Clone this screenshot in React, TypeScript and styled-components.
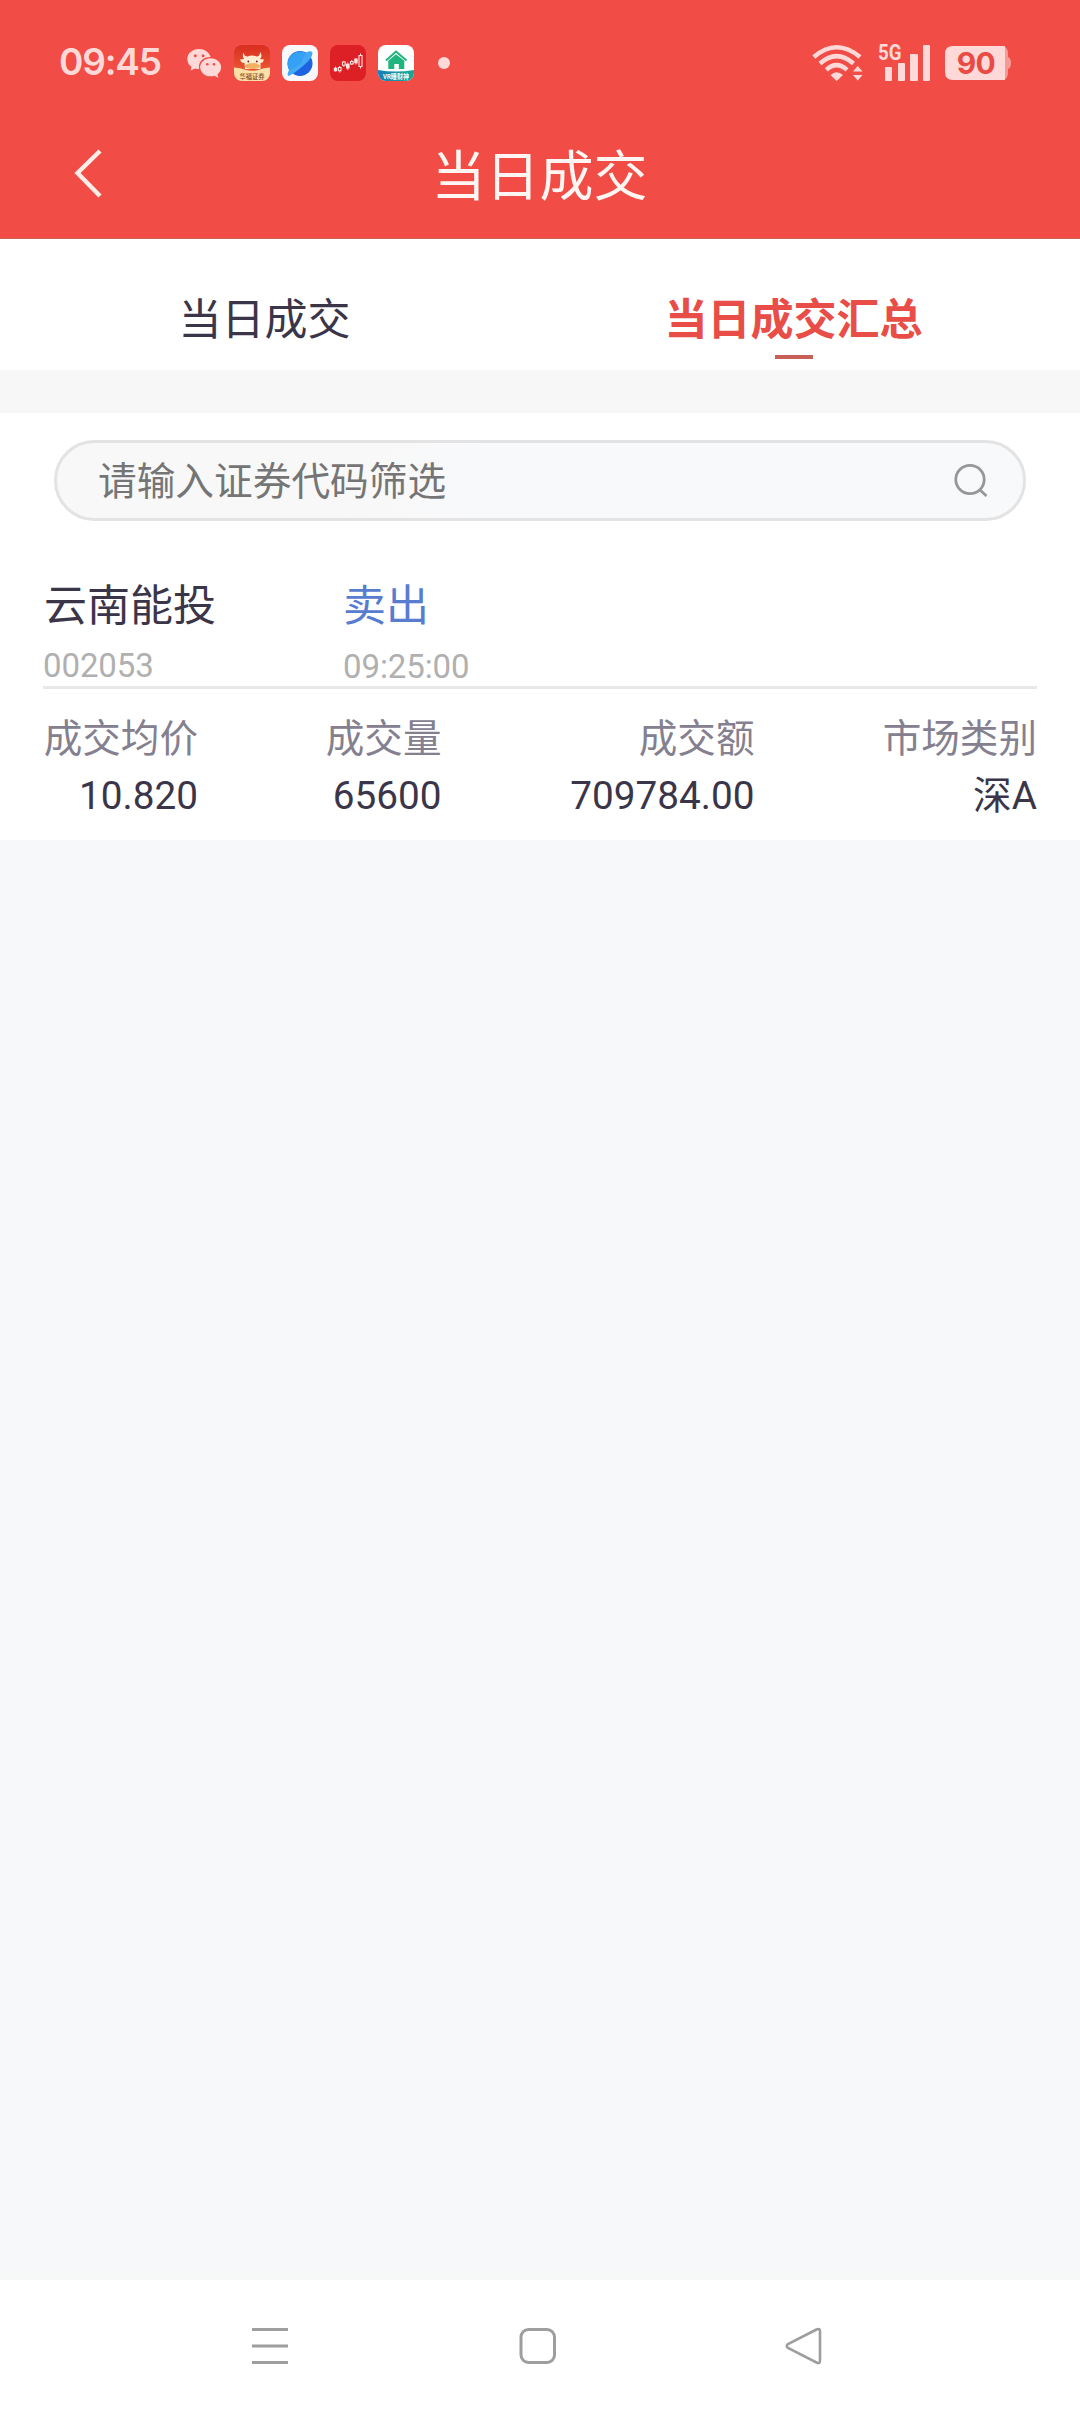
import React from "react";
import styled, { createGlobalStyle } from "styled-components";

const GlobalStyle = createGlobalStyle`
  * { box-sizing: border-box; }
  body {
    margin: 0;
    background: #f7f8fa;
    font-family: Roboto, "Noto Sans CJK SC", sans-serif;
    color: #3a3549;
  }
`;

const Screen = styled.div`
  width: 1080px;
  height: 2412px;
  display: flex;
  flex-direction: column;
  overflow: hidden;
  background: #f7f8fa;
`;

const Header = styled.header`
  height: 239px;
  flex: none;
  background: #f14d46;
  border-bottom: 1px solid #c9635c;
`;

const StatusBar = styled.div`
  height: 125px;
  display: flex;
  justify-content: space-between;
  padding: 0 68px 0 58px;
`;

const StatusGroup = styled.div<{ $gap: number }>`
  height: 126px;
  display: flex;
  align-items: center;
  gap: ${(p) => p.$gap}px;
  color: #ffd9d7;
`;

const Clock = styled.span`
  width: 117px;
  padding: 0 0 2px 1px;
  font: 600 37px/44px Inter, sans-serif;
  letter-spacing: -1.2px;
`;

const Notifications = styled.div`
  display: flex;
  align-items: center;
  gap: 12px;
`;

const Dot = styled.i`
  width: 12px;
  height: 12px;
  margin-left: 12px;
  border-radius: 50%;
  background: #ffd9d7;
`;

const TitleBar = styled.div`
  height: 104px;
  display: grid;
  grid-template-columns: 200px 1fr 200px;
  align-items: center;
`;

const BackButton = styled.button`
  display: flex;
  padding: 0 0 8px 73px;
  border: 0;
  background: none;
`;

const Title = styled.h1`
  margin: 0;
  padding: 2px 1px 0 0;
  text-align: center;
  font-size: 54px;
  font-weight: 400;
  line-height: 60px;
  color: #fff6f3;
`;

const Tabs = styled.nav`
  height: 131px;
  flex: none;
  display: flex;
  padding-right: 22px;
  background: #fff;
`;

const Tab = styled.div<{ $active?: boolean }>`
  flex: 1;
  display: flex;
  flex-direction: column;
  align-items: center;
  padding-top: 59px;
  font-size: 43px;
  line-height: 44px;
  font-weight: ${(p) => (p.$active ? 700 : 400)};
  color: ${(p) => (p.$active ? "#e84e47" : "#3a3549")};
`;

const Underline = styled.span`
  width: 38px;
  height: 4px;
  margin-top: 13px;
  background: #c8605a;
`;

const Divider = styled.div`
  height: 43px;
  flex: none;
  background: #f7f7f7;
`;

const Content = styled.main`
  height: 427px;
  flex: none;
  padding: 27px 43px 0;
  background: #fff;
`;

const SearchBox = styled.div`
  height: 81px;
  margin: 0 11px;
  padding: 0 35px 0 41px;
  display: flex;
  align-items: center;
  justify-content: space-between;
  border: 3px solid #e3e3e3;
  border-radius: 41px;
  background: linear-gradient(90deg, #f8f8f8 30%, #f8f9fb 45%);
`;

const Placeholder = styled.span`
  padding-top: 2px;
  font-size: 38.7px;
  line-height: 46px;
  color: #757575;
`;

const TradeHead = styled.section`
  height: 168px;
  padding-top: 60px;
  display: grid;
  grid-template-columns: 300px 1fr;
  grid-template-rows: 50px 1fr;
  border-bottom: 3px solid #e8e8e8;
`;

const Name = styled.div<{ $sell?: boolean }>`
  padding-left: ${(p) => (p.$sell ? 0 : 1)}px;
  font-size: 43px;
  line-height: 50px;
  color: ${(p) => (p.$sell ? "#587cd0" : "#3a3549")};
`;

const Meta = styled.div<{ $drop?: number }>`
  padding-top: ${(p) => 15 + (p.$drop ?? 0)}px;
  font-size: 33px;
  line-height: 40px;
  letter-spacing: -0.1px;
  color: #b0b0b0;
`;

const Figures = styled.section`
  display: grid;
  grid-template-columns: 155px 243.5px 313px 282.5px;
  padding-top: 26px;
  text-align: right;
`;

const Label = styled.div`
  font-size: 38.6px;
  line-height: 47px;
  color: #84808f;
`;

const Value = styled.div`
  margin-top: 10px;
  font-size: 38.7px;
  line-height: 48px;
  color: #3a3549;
`;

const Filler = styled.div`
  flex: 1;
  border-bottom: 10px solid #f7f8f8;
`;

const SystemNav = styled.footer`
  height: 132px;
  flex: none;
  display: flex;
  align-items: flex-start;
  padding: 46px 256px 0 250px;
  justify-content: space-between;
  background: #fff;
`;

const figures = [
  { label: "成交均价", value: "10.820" },
  { label: "成交量", value: "65600" },
  { label: "成交额", value: "709784.00" },
  { label: "市场类别", value: "深A" },
];

const WeChatIcon = () => (
  <svg width="35" height="30" viewBox="0 0 35 30">
    <path
      fill="#ffd9d7"
      d="M12 1C5.400 1 0.300 5.400 0.300 11c0 3.200 1.600 5.900 4.200 7.800L3.600 22.600l4.500-2.200c1.200.4 2.500.5 4 .5C11 13.500 16.500 9 23.600 9.100 22.300 4.300 17.600 1 12 1Z"
    />
    <path
      fill="#ffd9d7"
      d="M23.600 10.200c-5.900 0-10.400 4-10.400 9s4.500 9.100 10.400 9.100c1.300 0 2.500-.2 3.600-.6l4.200 2-.9-3.500c2.300-1.700 3.600-4.100 3.600-7 0-5-4.600-9-10.500-9Z"
    />
    <g fill="#f24d46">
      <circle cx="8.300" cy="7.800" r="1.500" />
      <circle cx="16" cy="7.800" r="1.500" />
      <circle cx="20.300" cy="16.200" r="1.300" />
      <circle cx="27" cy="16.200" r="1.300" />
    </g>
  </svg>
);

const BullIcon = () => (
  <svg width="36" height="36" viewBox="0 0 36 36">
    <defs>
      <linearGradient id="bull" x2="0" y2="1">
        <stop offset="0" stopColor="#d92d20" />
        <stop offset="1" stopColor="#f2683a" />
      </linearGradient>
      <clipPath id="bullClip">
        <rect width="36" height="36" rx="8" />
      </clipPath>
    </defs>
    <g clipPath="url(#bullClip)">
      <rect width="36" height="36" fill="url(#bull)" />
      <path
        d="M9.500 7.500Q10 11.500 13.500 11.500 18 9.500 22.500 11.500 26 11.500 26 7 29 11 26 14L30 14.500Q29 18 26.500 18L26.500 24H11L10.500 18Q7 18 6 14.500L10 14Q8 11 9.500 7.500Z"
        fill="#ffecd2"
      />
      <ellipse cx="18.500" cy="21" rx="7.500" ry="3" fill="#f5b060" />
      <circle cx="14.300" cy="16.500" r="0.900" fill="#5d251b" />
      <circle cx="22.800" cy="16.500" r="0.900" fill="#5d251b" />
      <path d="M0 22.500Q6 22.500 12 25 18 26.500 24 25 30 22.500 36 22.500V36H0Z" fill="#fbe1a8" />
      <text x="18" y="33.600" textAnchor="middle" fontSize="6.300" fontWeight="500" fill="#7a4a2c">
        华福证券
      </text>
    </g>
  </svg>
);

const BrowserIcon = () => (
  <svg width="36" height="36" viewBox="0 0 36 36">
    <rect width="36" height="36" rx="8" fill="#f8f8fa" />
    <circle cx="18" cy="18.500" r="12.500" fill="#1d63df" />
    <path d="M28 10.500Q22 22 9.500 28A12.500 12.500 0 0 1 27 10Z" fill="#35a1f5" />
    <path d="M24 7.500q6-2.500 6.500.5 0 5-9.500 13T6.500 31q-2-1 .5-6 7-1.500 12-7Z" fill="#45aaf6" />
  </svg>
);

const StockIcon = () => (
  <svg width="36" height="36" viewBox="0 0 36 36">
    <rect width="36" height="36" rx="8" fill="#dc2025" />
    <path
      d="M5.500 21.500v5M17.800 17.500v7.500M26 13.500v6M9.700 21v6.500M13.800 16v6M21.800 15v5M30.500 8.500v15"
      stroke="#ffe4df"
      strokeWidth="1"
    />
    <path d="M3.800 22.800h3.400v3.400H3.800zM16 18.800h3.600v4.700H16zM24.200 13.500h3.500v4.700h-3.500z" fill="#ffe4df" />
    <path
      d="M8.400 22.500h2.600v3.200H8.400zM12.500 17h2.700v3.200h-2.700zM20.500 16.500h2.600v2.500h-2.600zM29 10.500h3v11h-3z"
      fill="#dc2025"
      stroke="#ffe4df"
      strokeWidth="1.100"
    />
  </svg>
);

const HouseIcon = () => (
  <svg width="36" height="36" viewBox="0 0 36 36">
    <defs>
      <linearGradient id="vr">
        <stop stopColor="#197fb8" />
        <stop offset="1" stopColor="#16a995" />
      </linearGradient>
      <clipPath id="vrClip">
        <rect width="36" height="36" rx="8" />
      </clipPath>
    </defs>
    <g clipPath="url(#vrClip)">
      <rect width="36" height="36" fill="#fff" />
      <path d="M0 25Q18 28 36 25V36H0Z" fill="url(#vr)" />
      <path d="M8 15.500 18 6.500l10.500 9" fill="none" stroke="#20b57d" strokeWidth="2" />
      <path d="M10.300 15.800 18 9.200 26.300 15.800V24h-5.500v-5h-4.500v5h-6Z" fill="#20b57d" />
      <text
        x="5"
        y="34"
        fontSize="7"
        fontWeight="700"
        fill="#eaffff"
        textLength="26"
        lengthAdjust="spacingAndGlyphs"
      >
        VR睡财神
      </text>
    </g>
  </svg>
);

const WifiIcon = () => (
  <svg width="51" height="38" viewBox="0 0 51 38">
    <g fill="none" stroke="#ffd9d7" strokeWidth="4.400">
      <path d="M1.800 13Q24.500-6.500 48 13" />
      <path d="M8 19.500Q24.500 4.800 41.500 19.500" />
      <path d="M14.300 25.800Q24.500 16.500 35 25.800" />
    </g>
    <path d="M18.500 31q6-5.500 12.500 0L24.700 37Z" fill="#ffd9d7" />
    <path d="M41 27.500 45.700 22l4.800 5.500ZM41 31h9.500l-4.800 5.500Z" fill="#ffd9d7" />
  </svg>
);

const SignalIcon = () => (
  <svg width="53" height="44" viewBox="0 -3 53 44">
    <text
      x="0"
      y="15.500"
      fontSize="22"
      fontWeight="700"
      fill="#ffd9d7"
      textLength="23.500"
      lengthAdjust="spacingAndGlyphs"
    >
      5G
    </text>
    <g fill="#ffd9d7">
      <rect x="7" y="23" width="7" height="14" rx="1" />
      <rect x="20" y="19" width="7" height="18" rx="1" />
      <rect x="32" y="10" width="8" height="27" rx="1" />
      <rect x="45" y="1" width="7" height="36" rx="1" />
    </g>
  </svg>
);

const BatteryIcon = () => (
  <svg width="67" height="34" viewBox="0 0 67 34">
    <path d="M58 0q5 1 5 8v3q3 1 3 6t-3 6v3q0 7-5 8Z" fill="#f69a95" />
    <path d="M8 0H60V34H8Q0 34 0 26V8Q0 0 8 0Z" fill="#ffd9d7" />
    <text
      x="31"
      y="28"
      textAnchor="middle"
      fontFamily="Inter"
      fontSize="30"
      fontWeight="650"
      letterSpacing="-0.5"
      fill="#e94b44"
    >
      90
    </text>
  </svg>
);

export default function App() {
  return (
    <Screen>
      <GlobalStyle />
      <Header>
        <StatusBar>
          <StatusGroup $gap={12}>
            <Clock>09:45</Clock>
            <Notifications>
              <WeChatIcon />
              <BullIcon />
              <BrowserIcon />
              <StockIcon />
              <HouseIcon />
              <Dot />
            </Notifications>
          </StatusGroup>
          <StatusGroup $gap={14.5}>
            <WifiIcon />
            <SignalIcon />
            <BatteryIcon />
          </StatusGroup>
        </StatusBar>
        <TitleBar>
          <BackButton aria-label="返回">
            <svg width="30" height="50" viewBox="0 0 30 50">
              <path d="M27 3 4.500 25 27 48" fill="none" stroke="#ffede8" strokeWidth="4.400" />
            </svg>
          </BackButton>
          <Title>当日成交</Title>
        </TitleBar>
      </Header>
      <Tabs>
        <Tab>当日成交</Tab>
        <Tab $active>
          当日成交汇总
          <Underline />
        </Tab>
      </Tabs>
      <Divider />
      <Content>
        <SearchBox>
          <Placeholder>请输入证券代码筛选</Placeholder>
          <svg width="34" height="35" viewBox="0 0 34 35">
            <g fill="none" stroke="#969799" strokeWidth="2.800">
              <circle cx="16" cy="16.500" r="14.200" />
              <path d="m26 27 6.500 6" />
            </g>
          </svg>
        </SearchBox>
        <TradeHead>
          <Name>云南能投</Name>
          <Name $sell>卖出</Name>
          <Meta>002053</Meta>
          <Meta $drop={1}>09:25:00</Meta>
        </TradeHead>
        <Figures>
          {figures.map((f) => (
            <div key={f.label}>
              <Label>{f.label}</Label>
              <Value>{f.value}</Value>
            </div>
          ))}
        </Figures>
      </Content>
      <Filler />
      <SystemNav>
        <svg width="40" height="40" viewBox="0 0 40 40">
          <path d="M2 3.500h36M2 20h36M2 36.500h36" stroke="#9e9e9e" strokeWidth="3" />
        </svg>
        <svg width="40" height="40" viewBox="0 0 40 40">
          <rect x="4" y="3.500" width="33.500" height="33" rx="7.500" fill="none" stroke="#9e9e9e" strokeWidth="3" />
        </svg>
        <svg width="40" height="40" viewBox="0 0 40 40">
          <path
            d="M32.500 3.500 4 18Q1.500 20 4 22L32.500 36.500Q36 38 36 34.500V5.500Q36 2 32.500 3.500Z"
            fill="none"
            stroke="#9e9e9e"
            strokeWidth="2.600"
          />
        </svg>
      </SystemNav>
    </Screen>
  );
}
